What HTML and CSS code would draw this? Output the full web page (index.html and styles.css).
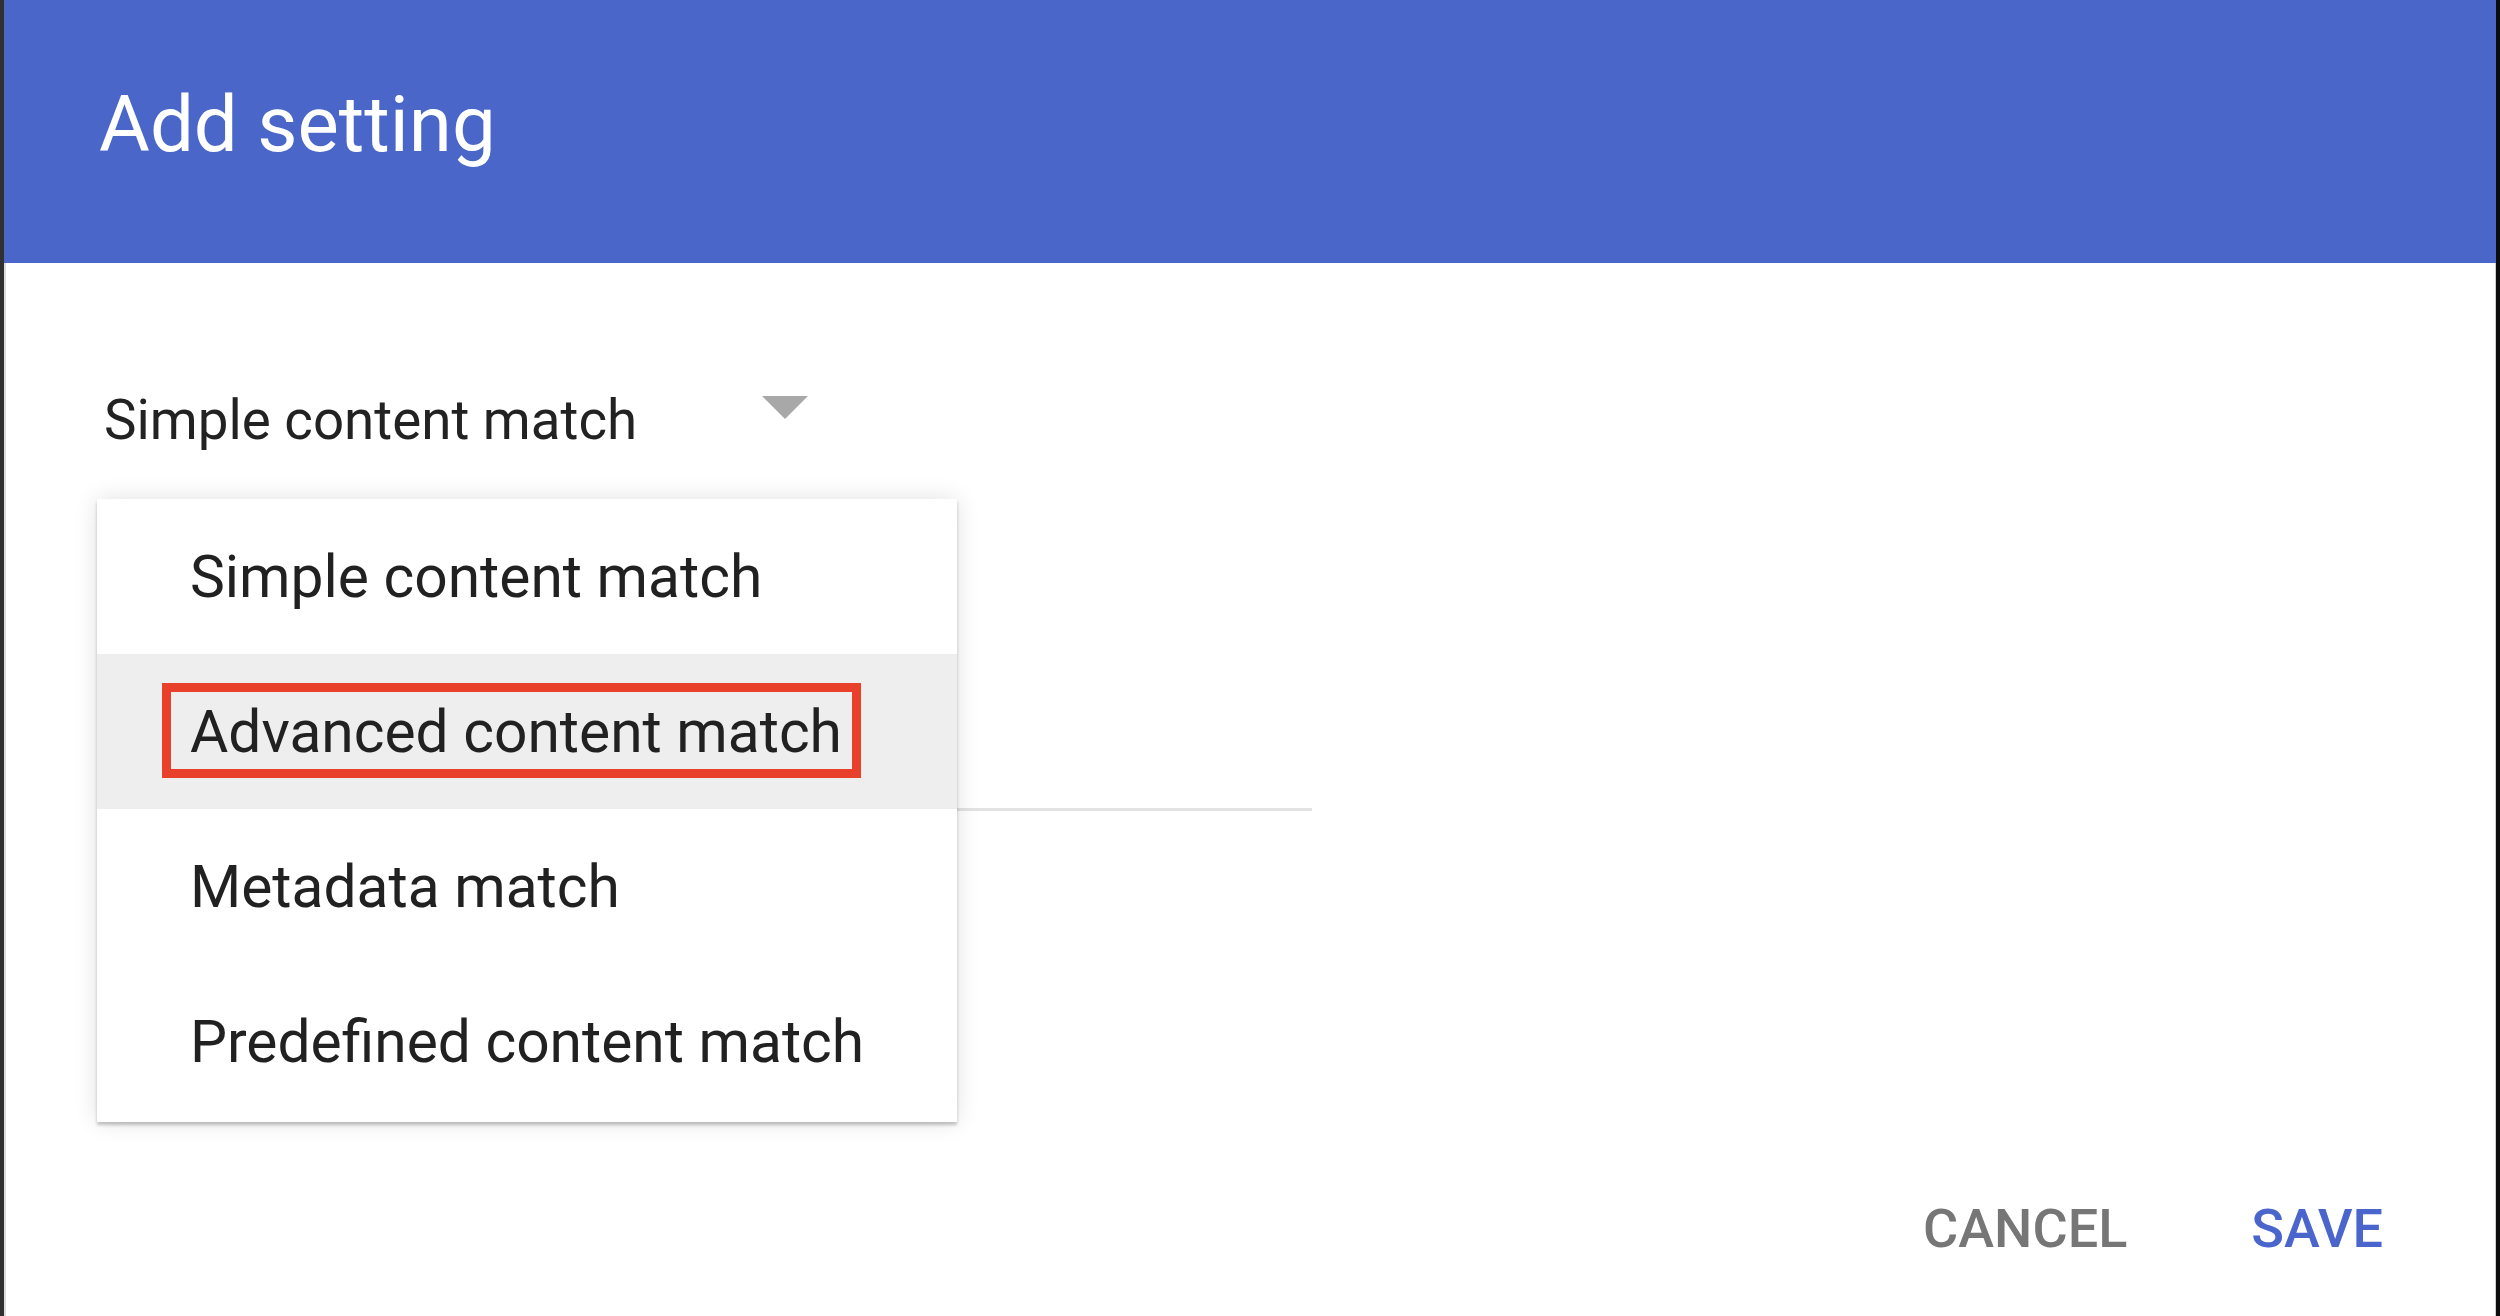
FILE: index.html
```html
<!DOCTYPE html>
<html lang="en">
<head>
<meta charset="utf-8">
<title>Add setting</title>
<link rel="stylesheet" href="styles.css">
</head>
<body>
<div class="frame">
  <div class="dialog">
    <header class="dialog-header">
      <h1 class="dialog-title">Add setting</h1>
    </header>
    <div class="dialog-body">
      <div class="select-row">
        <span class="select-value">Simple content match</span>
        <svg class="select-arrow" width="46" height="23" viewBox="0 0 46 23" aria-hidden="true"><polygon points="0,0 46,0 23,23" fill="#a8a8a8"/></svg>
      </div>
      <div class="text-field"></div>
      <div class="actions">
        <button class="btn btn-cancel">CANCEL</button>
        <button class="btn btn-save">SAVE</button>
      </div>
      <ul class="menu">
        <li class="menu-item">Simple content match</li>
        <li class="menu-item is-active"><span class="marked">Advanced content match</span></li>
        <li class="menu-item">Metadata match</li>
        <li class="menu-item">Predefined content match</li>
      </ul>
    </div>
  </div>
</div>
</body>
</html>
```

FILE: styles.css
```css
html, body {
  margin: 0;
  padding: 0;
  height: 100%;
}

body {
  background: #ffffff;
  font-family: Roboto, "Noto Sans", "Liberation Sans", sans-serif;
  color: #212121;
}

.frame {
  height: 1316px;
  border-left: 4px solid #303030;
  border-right: 4px solid #0c0c0c;
  box-sizing: border-box;
}

.dialog {
  position: relative;
  height: 100%;
  display: flex;
  flex-direction: column;
  background: #ffffff;
}

.dialog-header {
  height: 263px;
  flex: none;
  background: #4a66c8;
  box-sizing: border-box;
  padding: 85px 0 0 95px;
}

.dialog-title {
  margin: 0;
  font-size: 78px;
  line-height: 80px;
  font-weight: 400;
  color: #ffffff;
}

.dialog-body {
  flex: 1;
  display: flex;
  flex-direction: column;
  border-left: 2px solid #dcdcdc;
  border-right: 1px solid #cfcfcf;
  padding: 125px 0 0 98px;
}

.select-row {
  display: flex;
  align-items: flex-start;
  justify-content: space-between;
  width: 704px;
  height: 64px;
}

.select-value {
  font-size: 54.7px;
  line-height: 64px;
  color: #222222;
}

.select-arrow {
  display: block;
  margin-top: 8px;
}

.text-field {
  width: 1208px;
  height: 60px;
  margin-top: 296px;
  border-bottom: 3px solid #e2e2e2;
}

.actions {
  display: flex;
  justify-content: flex-end;
  gap: 76px;
  margin-top: 386px;
  padding-right: 88px;
}

.btn {
  background: none;
  border: 0;
  padding: 0 24px;
  margin: 0;
  font-family: Roboto, "Noto Sans", "Liberation Sans", sans-serif;
  font-size: 54px;
  line-height: 64px;
  font-weight: 500;
  cursor: pointer;
}

.btn-cancel {
  color: #767676;
}

.btn-save {
  color: #4a66cc;
}

.menu {
  position: absolute;
  left: 93px;
  top: 499px;
  width: 860px;
  margin: 0;
  padding: 0 0 3px;
  list-style: none;
  background: #ffffff;
  box-shadow: 0 3px 3px rgba(0, 0, 0, 0.22), 0 0 22px rgba(0, 0, 0, 0.12);
}

.menu-item {
  height: 155px;
  display: flex;
  align-items: center;
  padding-left: 93px;
  font-size: 58.7px;
  line-height: 68px;
  color: #212121;
}

.menu-item.is-active {
  background: #eeeeee;
}

.marked {
  position: relative;
}

.marked::after {
  content: "";
  position: absolute;
  left: -28px;
  right: -19px;
  top: -15px;
  bottom: -12px;
  border: 9px solid #e8402a;
}
```
